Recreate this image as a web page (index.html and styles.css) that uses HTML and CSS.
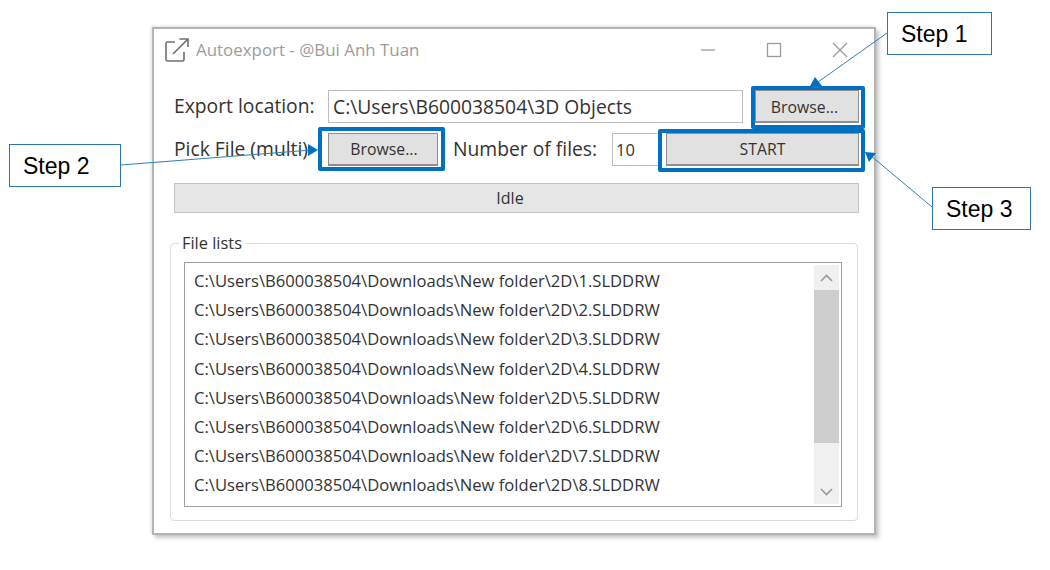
FILE: index.html
```html
<!DOCTYPE html>
<html lang="en">
<head>
    <meta charset="UTF-8">
    <title>Autoexport</title>
    <link rel="stylesheet" href="styles.css">
</head>
<body>
    <div class="window">
        <div class="titlebar">
            <svg class="app-icon" width="26" height="26" viewBox="0 0 26 26" fill="none" stroke="#6f6f6f" stroke-width="1.6">
                <path d="M11 5H3.5C2.5 5 2 5.5 2 6.500V22.500C2 23.500 2.500 24 3.500 24H18.500C19.500 24 20 23.500 20 22.500V15"/>
                <path d="M9 17L24 2M15.500 2H24V10"/>
            </svg>
            <span class="title">Autoexport - @Bui Anh Tuan</span>
            <div class="controls">
                <svg width="16" height="16" viewBox="0 0 16 16" stroke="#9b9b9b" stroke-width="1.300" fill="none"><path d="M1 8H15"/></svg>
                <svg width="16" height="16" viewBox="0 0 16 16" stroke="#9b9b9b" stroke-width="1.300" fill="none"><rect x="1.500" y="1.500" width="13" height="13"/></svg>
                <svg width="16" height="16" viewBox="0 0 16 16" stroke="#9b9b9b" stroke-width="1.300" fill="none"><path d="M1 1L15 15M15 1L1 15"/></svg>
            </div>
        </div>

        <div class="content">
            <div class="row">
                <label class="label label-export">Export location:</label>
                <div class="field field-path">C:\Users\B600038504\3D Objects</div>
                <button class="btn btn-browse-top">Browse...</button>
            </div>
            <div class="row row-second">
                <label class="label label-pick">Pick File (multi)</label>
                <button class="btn btn-browse">Browse...</button>
                <label class="label label-count">Number of files:</label>
                <div class="field field-count">10</div>
                <button class="btn btn-start">START</button>
            </div>
            <div class="status">Idle</div>

            <fieldset class="group">
                <legend>File lists</legend>
                <div class="listbox">
                    <ul class="files">
                        <li>C:\Users\B600038504\Downloads\New folder\2D\1.SLDDRW</li>
                        <li>C:\Users\B600038504\Downloads\New folder\2D\2.SLDDRW</li>
                        <li>C:\Users\B600038504\Downloads\New folder\2D\3.SLDDRW</li>
                        <li>C:\Users\B600038504\Downloads\New folder\2D\4.SLDDRW</li>
                        <li>C:\Users\B600038504\Downloads\New folder\2D\5.SLDDRW</li>
                        <li>C:\Users\B600038504\Downloads\New folder\2D\6.SLDDRW</li>
                        <li>C:\Users\B600038504\Downloads\New folder\2D\7.SLDDRW</li>
                        <li>C:\Users\B600038504\Downloads\New folder\2D\8.SLDDRW</li>
                    </ul>
                    <div class="scrollbar">
                        <div class="scroll-arrow">
                            <svg width="13" height="8" viewBox="0 0 13 8" fill="none" stroke="#9a9a9a" stroke-width="1.600"><path d="M1 7L6.500 1.500L12 7"/></svg>
                        </div>
                        <div class="scroll-thumb"></div>
                        <div class="scroll-rest">
                            <svg width="13" height="8" viewBox="0 0 13 8" fill="none" stroke="#9a9a9a" stroke-width="1.600"><path d="M1 1L6.500 6.500L12 1"/></svg>
                        </div>
                    </div>
                </div>
            </fieldset>
        </div>
    </div>

    <!-- annotations on top of the screenshot -->
    <div class="mark mark-1"></div>
    <div class="mark mark-2"></div>
    <div class="mark mark-3"></div>

    <svg class="arrows" width="1050" height="570" viewBox="0 0 1050 570" fill="#0070c0" stroke="none">
        <path d="M887 33L818 82" stroke="#2e7fb5" stroke-width="1" fill="none"/>
        <path d="M815 77L810 86L822 86Z"/>
        <path d="M121 165L312 150" stroke="#2e7fb5" stroke-width="1" fill="none"/>
        <path d="M308 144L318 150L308 156Z"/>
        <path d="M932 207L870 155" stroke="#2e7fb5" stroke-width="1" fill="none"/>
        <path d="M865 152L876 153L869 162Z"/>
    </svg>

    <div class="callout callout-1">Step 1</div>
    <div class="callout callout-2">Step 2</div>
    <div class="callout callout-3">Step 3</div>
</body>
</html>
```

FILE: styles.css
```css
/* Autoexport window with step annotations */
body {
    margin: 0;
    width: 1050px;
    height: 570px;
    overflow: hidden;
    position: relative;
    background-color: #fff;
    font-family: "Open Sans", "Noto Sans", sans-serif;
    color: #333;
}
.window {
    box-sizing: border-box;
    width: 724px;
    height: 508px;
    margin: 27px 0 0 152px;
    background-color: #fff;
    border: 2px solid #b4b4b4;
    box-shadow: 3px 3px 4px rgba(0, 0, 0, 0.22), -1px -1px 3px rgba(0, 0, 0, 0.12);
}
.titlebar {
    display: flex;
    align-items: center;
    height: 42px;
    padding-left: 10px;
}
.app-icon {
    flex: none;
}
.title {
    margin-left: 6px;
    padding-bottom: 2px;
    font-size: 16.900px;
    color: #9c9c9c;
}
.controls {
    display: flex;
    gap: 50px;
    margin-left: auto;
    margin-right: 26px;
}
.content {
    padding: 19px 15px 0 20px;
}
.row {
    display: flex;
    align-items: center;
    height: 33px;
}
.row-second {
    margin-top: 10px;
}
.label {
    padding-bottom: 2px;
    font-size: 19.300px;
    white-space: nowrap;
}
.label-export {
    width: 154px;
    flex: none;
}
.label-pick {
    width: 154px;
    flex: none;
}
.label-count {
    width: 159px;
    flex: none;
    margin-left: 15px;
}
.field {
    box-sizing: border-box;
    height: 33px;
    line-height: 31px;
    padding-left: 4px;
    border: 1px solid #bdbdbd;
    font-size: 19.300px;
    background-color: #fff;
}
.field-path {
    width: 415px;
}
.field-count {
    width: 47px;
    padding-left: 3px;
    font-size: 16.500px;
}
.btn {
    box-sizing: border-box;
    height: 33px;
    padding: 0;
    border: 1px solid #8f8f8f;
    border-bottom-width: 2px;
    background-color: #e1e1e1;
    font-family: inherit;
    font-size: 15.800px;
    color: #333;
}
.btn-browse-top {
    width: 104px;
    margin-left: 12px;
    padding: 2px 5px 0 0;
}
.btn-browse {
    width: 110px;
    padding-left: 2px;
}
.btn-start {
    width: 193px;
    margin-left: 7px;
}
.status {
    box-sizing: border-box;
    height: 30px;
    line-height: 28px;
    margin-top: 17px;
    padding-right: 13px;
    text-align: center;
    font-size: 16px;
    background-color: #e6e6e6;
    border: 1px solid #c4c4c4;
}
.group {
    box-sizing: border-box;
    width: 688px;
    height: 287px;
    margin: 21px 0 0 -4px;
    padding: 10px 14px 0 13px;
    border: 1px solid #dcdcdc;
    border-radius: 4px;
    min-width: 0;
}
.group legend {
    padding: 0 4px 0 3px;
    margin-left: -5px;
    font-size: 16.400px;
    line-height: 18px;
}
.listbox {
    box-sizing: border-box;
    display: flex;
    width: 658px;
    height: 245px;
    padding: 2px;
    border: 1px solid #a0a0a0;
}
.files {
    flex: 1;
    list-style: none;
    margin: 0;
    padding: 1px 0 0 7px;
    font-size: 16.600px;
}
.files li {
    height: 29.200px;
    line-height: 29px;
    white-space: nowrap;
}
.scrollbar {
    display: flex;
    flex-direction: column;
    flex: none;
    width: 25px;
    background-color: #f0f0f0;
}
.scroll-arrow {
    display: flex;
    justify-content: center;
    align-items: center;
    height: 25px;
}
.scroll-thumb {
    height: 153px;
    background-color: #cdcdcd;
}
.scroll-rest {
    display: flex;
    flex: 1;
    justify-content: center;
    align-items: flex-end;
    padding-bottom: 8px;
}
.mark {
    position: absolute;
    box-sizing: border-box;
    border: 4px solid #0070c0;
    border-radius: 2px;
}
.mark-1 {
    left: 751px;
    top: 86px;
    width: 114px;
    height: 43px;
}
.mark-2 {
    left: 318px;
    top: 127px;
    width: 127px;
    height: 44px;
}
.mark-3 {
    left: 658px;
    top: 129px;
    width: 207px;
    height: 43px;
}
.arrows {
    position: absolute;
    left: 0;
    top: 0;
}
.callout {
    position: absolute;
    box-sizing: border-box;
    width: 105px;
    height: 43px;
    padding-left: 13px;
    line-height: 42px;
    background-color: #fff;
    border: 1px solid #2e75a8;
    font-family: "Liberation Sans", Arial, sans-serif;
    font-size: 23px;
    color: #000;
}
.callout-1 {
    left: 887px;
    top: 12px;
}
.callout-2 {
    left: 9px;
    top: 144px;
    width: 112px;
}
.callout-3 {
    left: 932px;
    top: 187px;
    width: 99px;
}
```
